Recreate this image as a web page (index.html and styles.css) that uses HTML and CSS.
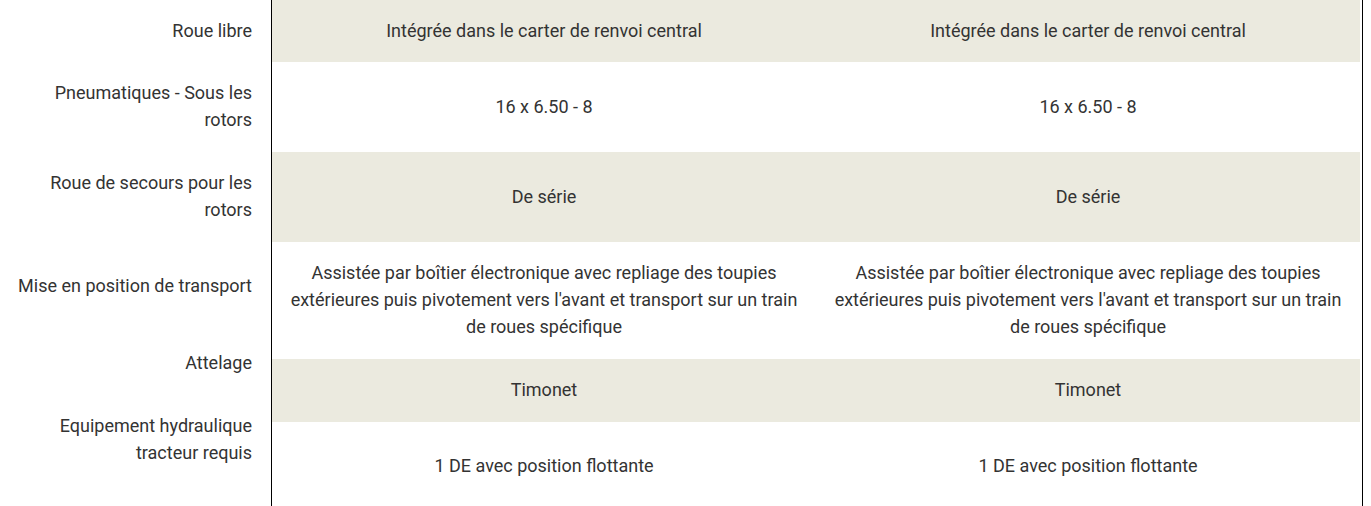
FILE: index.html
```html
<!DOCTYPE html>
<html lang="fr">
<head>
<meta charset="utf-8">
<title>Caractéristiques</title>
<link rel="stylesheet" href="styles.css">
</head>
<body>
<div class="spec">
  <div class="labels">
    <div class="label h62">Roue libre</div>
    <div class="label h90">Pneumatiques - Sous les rotors</div>
    <div class="label h103">Roue de secours pour les rotors</div>
    <div class="label h77">Mise en position de transport</div>
    <div class="label h63">Attelage</div>
    <div class="label">Equipement hydraulique tracteur requis</div>
  </div>
  <div class="values">
    <div class="row alt r62">
      <div class="cell">Intégrée dans le carter de renvoi central</div>
      <div class="cell">Intégrée dans le carter de renvoi central</div>
    </div>
    <div class="row r90">
      <div class="cell">16 x 6.50 - 8</div>
      <div class="cell">16 x 6.50 - 8</div>
    </div>
    <div class="row alt r90">
      <div class="cell">De série</div>
      <div class="cell">De série</div>
    </div>
    <div class="row">
      <div class="cell">Assistée par boîtier électronique avec repliage des toupies extérieures puis pivotement vers l'avant et transport sur un train de roues spécifique</div>
      <div class="cell">Assistée par boîtier électronique avec repliage des toupies extérieures puis pivotement vers l'avant et transport sur un train de roues spécifique</div>
    </div>
    <div class="row alt r63">
      <div class="cell">Timonet</div>
      <div class="cell">Timonet</div>
    </div>
    <div class="row r88">
      <div class="cell">1 DE avec position flottante</div>
      <div class="cell">1 DE avec position flottante</div>
    </div>
  </div>
</div>
</body>
</html>
```

FILE: styles.css
```css
html, body {
  margin: 0;
  padding: 0;
  background: #ffffff;
}

body {
  font-family: Roboto, "Liberation Sans", Arial, sans-serif;
  font-size: 18px;
  line-height: 27px;
  color: #333333;
}

.spec {
  display: flex;
  width: 1362px;
  height: 506px;
  overflow: hidden;
  border-right: 1px solid #000000;
  box-sizing: content-box;
}

.labels {
  width: 271px;
  flex: none;
  border-right: 1px solid #000000;
  display: flex;
  flex-direction: column;
}

.label {
  box-sizing: border-box;
  padding: 17px 19px 0 15px;
  text-align: right;
  flex: none;
}

.h62 { height: 62px; }
.h90 { height: 90px; }
.h103 { height: 103px; }
.h77 { height: 77px; }
.h63 { height: 63px; }

.values {
  width: 1088px;
  flex: none;
  display: flex;
  flex-direction: column;
}

.row {
  display: grid;
  grid-template-columns: 1fr 1fr;
  align-items: center;
  box-sizing: border-box;
  flex: none;
}

.row.alt {
  background: #ebeadf;
}

.r62 { height: 62px; }
.r90 { height: 90px; }
.r63 { height: 63px; }
.r88 { height: 88px; }

.cell {
  padding: 17px 15px 19px;
  text-align: center;
}
```
